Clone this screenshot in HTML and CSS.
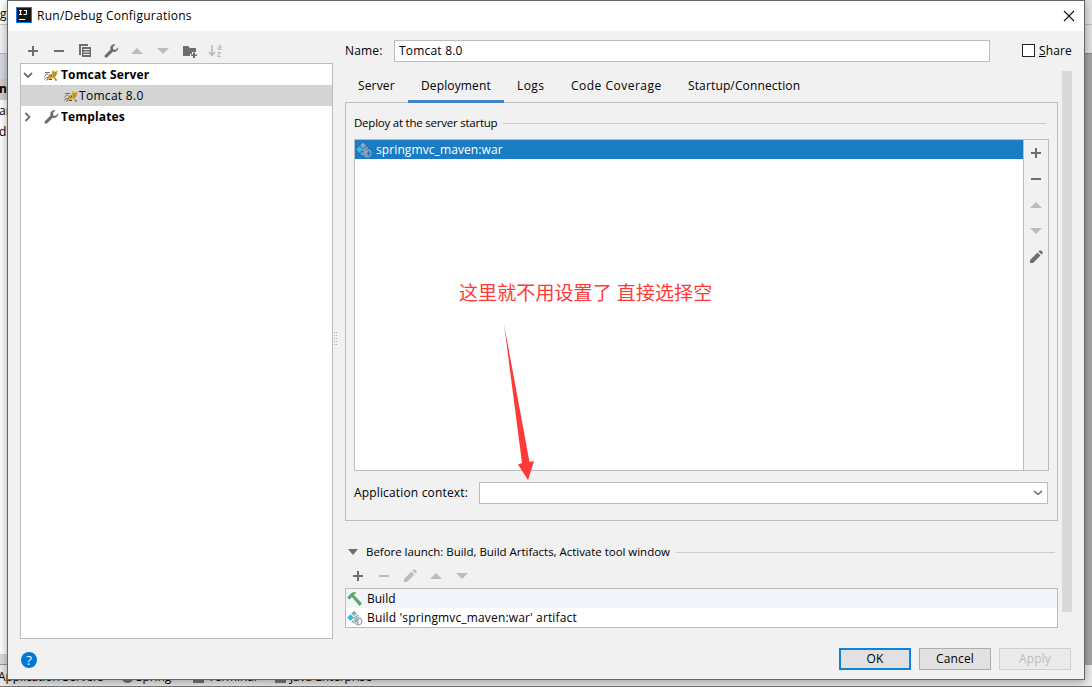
FILE: index.html
```html
<!DOCTYPE html>
<html lang="zh-CN">
<head>
    <meta charset="UTF-8">
    <meta name="viewport" content="width=device-width, initial-scale=1.0">
    <link rel="stylesheet" href="styles.css">
    <title>Run/Debug Configurations</title>
</head>
<body>
    <!-- shared icons -->
    <svg class="sprite">
        <symbol id="plus" viewBox="0 0 16 16"><path d="M7 3h2v4h4v2h-4v4h-2v-4h-4v-2h4z" fill="currentColor"/></symbol>
        <symbol id="minus" viewBox="0 0 16 16"><path d="M3 7h10v2h-10z" fill="currentColor"/></symbol>
        <symbol id="up" viewBox="0 0 16 16"><path d="M8 5l6 6h-12z" fill="currentColor"/></symbol>
        <symbol id="down" viewBox="0 0 16 16"><path d="M8 11l6-6h-12z" fill="currentColor"/></symbol>
        <symbol id="pencil" viewBox="0 0 16 16"><path d="M2 11l7.500-7.500 3 3-7.500 7.500h-3zM10.500 2.500l1-1q.8-.7 1.600 0l1.400 1.400q.7.800 0 1.600l-1 1z" fill="currentColor"/></symbol>
        <symbol id="wrench" viewBox="0 0 16 16"><path d="M14.300 4.200l-2.700 2.600-2.300-.4-.4-2.300 2.600-2.700c-1.800-.5-3.500.1-4.500 1.500-.8 1.100-.9 2.300-.5 3.500l-5.500 5.600c-.6.6-.6 1.600 0 2.200s1.600.6 2.200 0l5.600-5.500c1.300.5 2.700.2 3.800-.7 1.200-1 1.900-2.400 1.700-3.800z" fill="currentColor"/></symbol>
        <symbol id="artifact" viewBox="0 0 16 16">
            <path d="M7 1l2.500 2.500-2.500 2.500-2.500-2.500z" fill="#9aa7b0" stroke="#9aa7b0" stroke-width=".6"/>
            <path d="M3.500 4.500l3 3-3 3-3-3z" fill="#40b6e0" stroke="#40b6e0" stroke-width=".6"/>
            <path d="M10.500 4.500l1.800 1.800c-2.500.2-4.300 1.200-5 3l-1.300-1.300z" fill="#9aa7b0"/>
            <path d="M6 10l.6 1 .4 2.500-3-2z" fill="#9aa7b0"/>
            <circle cx="11.300" cy="11.300" r="3.500" fill="none" stroke="#9aa7b0" stroke-width="1.200"/>
            <path d="M8.500 9.500l3-1 .8 1.200-1.800 1.500 1.500 1.300-.8 2.200-1.500-2-1.500-1z" fill="#9aa7b0"/>
        </symbol>
        <symbol id="tomcat" viewBox="0 0 16 16">
            <path d="M2 5.500h5M1.500 9.500q1-3 4-2.500M1 12.500l3-2.500M3 13.500l3-2" stroke="#77756d" stroke-width="1" fill="none"/>
            <path d="M4 11.500l2-4 2.500-.5 .8-4 2 1.500h1l2.200-1.500v4l-1.500 1.500-.5 1 1 3.500h-1.500l-2-2-2.500 1.500h-2.500z" fill="#d9ab47"/>
            <path d="M6 8.500l1.500 1M8 7.500l1 2M10.500 5.500v1M12.500 5.500v1M10.500 8h2M6 12.500h3M12 13h2M4 11l1.500-.5" stroke="#4a4435" stroke-width=".9" fill="none"/>
        </symbol>
    </svg>

    <!-- IDE window behind the dialog -->
    <div class="ide">
        <div class="ide-left">
            <span class="ide-menu">g</span>
            <span class="ide-nav"></span>
            <span class="ide-bar"></span>
            <span class="ide-row ide-active">na</span>
            <span class="ide-row">ar</span>
            <span class="ide-row">d</span>
            <span class="ide-foot"></span>
        </div>
        <div class="ide-right">
            <span class="ide-top"></span>
            <span class="ide-tools"></span>
            <span class="ide-editor"></span>
        </div>
        <div class="ide-tabs">
            <span class="tool t-servers">Application Servers</span>
            <i class="blob"></i><span class="tool t-spring">Spring</span>
            <i class="blob square"></i><span class="tool t-terminal">Terminal</span>
            <i class="blob square"></i><span class="tool t-java">Java Enterprise</span>
        </div>
    </div>

    <div class="dialog">
        <div class="titlebar">
            <svg class="logo" viewBox="0 0 16 16"><rect width="16" height="16" fill="#087cfa"/><rect x="1" y="1" width="14" height="14" fill="#151515"/><path d="M3 3.500h3M4.500 3.500v4M3 7.500h3M8 3.500h2.500v3q0 1-1 1h-2M3 12.500h6" stroke="#fff" stroke-width="1.100" fill="none"/></svg>
            <span class="title">Run/Debug Configurations</span>
            <svg class="close" viewBox="0 0 12 12"><path d="M1 1l10 10M11 1l-10 10" stroke="#111" stroke-width="1.100"/></svg>
        </div>

        <div class="content">
            <div class="sidebar">
                <div class="toolbar">
                    <svg class="icon"><use href="#plus"/></svg>
                    <svg class="icon"><use href="#minus"/></svg>
                    <svg class="icon" viewBox="0 0 16 16"><path d="M2 1h9v2h-7v9h-2z" fill="currentColor"/><path d="M5 4h9v10h-9zM6.500 6v1h6v-1zM6.500 8.500v1h6v-1zM6.500 11v1h6v-1z" fill="currentColor" fill-rule="evenodd"/></svg>
                    <svg class="icon wr"><use href="#wrench"/></svg>
                    <svg class="icon off"><use href="#up"/></svg>
                    <svg class="icon off"><use href="#down"/></svg>
                    <svg class="icon folder" viewBox="0 0 16 16"><path d="M1 3h5l2 2h6v4h-4v2h-2v2h-7z" fill="currentColor"/><path d="M11 9.500h2v2h2v1.500h-2v2h-2v-2h-2v-1.500h2z" fill="currentColor"/></svg>
                    <svg class="icon off sort-icon" viewBox="0 0 16 16"><path d="M4 2v10M1 9l3 3.500 3-3.500" stroke="currentColor" stroke-width="1.700" fill="none"/><text x="9" y="6.500" class="sort">a</text><text x="9" y="14" class="sort">z</text></svg>
                </div>
                <div class="tree">
                    <div class="node">
                        <svg class="arrow" viewBox="0 0 10 10"><path d="M1 3l4 4 4-4" stroke="#6e6e6e" stroke-width="1.800" fill="none"/></svg>
                        <svg class="icon"><use href="#tomcat"/></svg>
                        <b>Tomcat Server</b>
                    </div>
                    <div class="node child selected">
                        <svg class="icon"><use href="#tomcat"/></svg>
                        <span class="n-tomcat">Tomcat 8.0</span>
                    </div>
                    <div class="node">
                        <svg class="arrow" viewBox="0 0 10 10"><path d="M2.500 1l4 4-4 4" stroke="#6e6e6e" stroke-width="1.800" fill="none"/></svg>
                        <svg class="icon wr"><use href="#wrench"/></svg>
                        <b>Templates</b>
                    </div>
                </div>
            </div>

            <div class="splitter"><i></i><i></i><i></i><i></i><i></i><i></i><i></i><i></i><i></i><i></i></div>

            <div class="main">
                <div class="name-row">
                    <label class="name-label">Name:</label>
                    <div class="name-input">Tomcat 8.0</div>
                    <span class="checkbox"></span>
                    <span class="share"><u>S</u>hare</span>
                </div>
                <div class="scroll-area">
                    <div class="form">
                        <div class="tabs">
                            <span class="tab tab-server">Server</span>
                            <span class="tab tab-deploy active">Deployment</span>
                            <span class="tab tab-logs">Logs</span>
                            <span class="tab tab-code">Code Coverage</span>
                            <span class="tab tab-startup">Startup/Connection</span>
                        </div>
                        <div class="panel">
                            <div class="heading"><span class="h-deploy">Deploy at the server startup</span></div>
                            <div class="deploy">
                                <div class="list">
                                    <div class="list-row">
                                        <svg class="icon"><use href="#artifact"/></svg>
                                        <span class="war">springmvc_maven:war</span>
                                    </div>
                                    <p class="note">这里就不用设置了 直接选择空</p>
                                    <svg class="pointer" viewBox="0 0 32 156"><path d="M0 0L25.500 138L30 137L24 156L14 140.500L18 139Z" fill="#ff3838"/></svg>
                                </div>
                                <div class="actions">
                                    <svg class="icon"><use href="#plus"/></svg>
                                    <svg class="icon"><use href="#minus"/></svg>
                                    <svg class="icon off"><use href="#up"/></svg>
                                    <svg class="icon off"><use href="#down"/></svg>
                                    <svg class="icon"><use href="#pencil"/></svg>
                                </div>
                            </div>
                            <div class="context">
                                <span class="context-label">Application context:</span>
                                <div class="combo"><svg class="chevron" viewBox="0 0 10 6"><path d="M1 1l4 3.500 4-3.500" stroke="#555" stroke-width="1.200" fill="none"/></svg></div>
                            </div>
                        </div>
                        <div class="heading launch">
                            <svg class="caret" viewBox="0 0 10 6"><path d="M0 0h10l-5 6z" fill="#6e6e6e"/></svg>
                            <span class="h-launch">Before launch: Build, Build Artifacts, Activate tool window</span>
                        </div>
                        <div class="toolbar tasks-bar">
                            <svg class="icon"><use href="#plus"/></svg>
                            <svg class="icon off"><use href="#minus"/></svg>
                            <svg class="icon off"><use href="#pencil"/></svg>
                            <svg class="icon off"><use href="#up"/></svg>
                            <svg class="icon off"><use href="#down"/></svg>
                        </div>
                        <div class="tasks">
                            <div class="task first">
                                <svg class="icon" viewBox="0 0 16 16"><path d="M0 6.500l5-5 4.500-.5-2.500 3 8 8.500-2.500 2.500-7.500-9-2.500 2.500z" fill="#59a869"/></svg>
                                <span class="k-build">Build</span>
                            </div>
                            <div class="task">
                                <svg class="icon"><use href="#artifact"/></svg>
                                <span class="k-artifact">Build 'springmvc_maven:war' artifact</span>
                            </div>
                        </div>
                    </div>
                    <div class="scrollbar"></div>
                </div>
            </div>
        </div>

        <div class="footer">
            <span class="help">?</span>
            <span class="btn ok">OK</span>
            <span class="btn">Cancel</span>
            <span class="btn disabled">Apply</span>
        </div>
    </div>
</body>
</html>
```
FILE: styles.css
```css
* {
    box-sizing: border-box;
}

body {
    margin: 0;
    width: 1092px;
    height: 687px;
    overflow: hidden;
    position: relative;
    background: #f0f0f0;
    color: #000;
    font: 12px/16px "Open Sans", "Noto Sans CJK SC", sans-serif;
    white-space: nowrap;
}

svg {
    display: block;
    flex: none;
}

.sprite {
    position: absolute;
    width: 0;
    height: 0;
}

.icon {
    width: 16px;
    height: 16px;
    color: #6e6e6e;
}

.off {
    color: #bcbcbc;
}

.sort-icon {
    overflow: visible;
}

.sort {
    font: bold 8px "Open Sans", sans-serif;
    fill: #bcbcbc;
}

/* window behind */
.ide {
    display: grid;
    grid-template-columns: 8px 1fr 8px;
    grid-template-rows: 665px 22px;
    height: 687px;
}

.ide-left {
    display: flex;
    flex-direction: column;
    background: #fff;
    border-bottom: 1px solid #999;
    overflow: hidden;
}

.ide-left span {
    flex: none;
}

.ide-menu {
    height: 25px;
    padding-top: 6px;
    border-bottom: 1px solid #ccc;
}

.ide-nav {
    height: 29px;
    background: #f2f2f2;
    border-bottom: 1px solid #bbb;
}

.ide-bar {
    height: 25px;
    background: #d5d9e0;
}

.ide-row {
    height: 21px;
    padding-top: 3px;
    text-indent: -1px;
}

.ide-active {
    background: #d0d0d0;
    font-weight: bold;
    padding-top: 2px;
}

.ide-foot {
    margin-top: auto;
    height: 10px;
    background: #d8d8d8;
}

.ide-right {
    grid-column: 3;
    display: flex;
    flex-direction: column;
}

.ide-top {
    height: 25px;
    background: #e4e4e4;
    border-bottom: 1px solid #bbb;
}

.ide-tools {
    height: 29px;
    background: #e2e2e2;
    border-bottom: 1px solid #888;
}

.ide-editor {
    flex: 1;
    background: #a6a6a6;
}

.ide-tabs {
    grid-column: 1 / 4;
    display: flex;
    align-items: flex-start;
    background: #ebebeb;
    border-bottom: 1px solid #777;
    padding-top: 4px;
}

.tool {
    text-indent: -2px;
    letter-spacing: -.1px;
}

.t-servers {
    width: 97px;
}

.t-spring {
    width: 34px;
}

.t-terminal {
    width: 44px;
}

.blob {
    width: 11px;
    height: 9px;
    margin: 5px 5px 0 25px;
    border-radius: 50%;
    background: #777;
}

.square {
    margin: 5px 6px 0 21px;
    border-radius: 0;
}

/* dialog */
.dialog {
    position: absolute;
    left: 7px;
    top: 0;
    width: 1078px;
    height: 680px;
    display: flex;
    flex-direction: column;
    border: 1px solid #666;
    background: #f1f1f1;
    box-shadow: 0 2px 9px rgba(0, 0, 0, .35);
}

.titlebar {
    height: 30px;
    display: flex;
    align-items: center;
    padding: 0 9px 0 8px;
    background: #fff;
}

.logo {
    width: 16px;
    height: 16px;
    margin-top: -2px;
}

.title {
    margin: 0 auto 0 5px;
    letter-spacing: .26px;
}

.close {
    width: 12px;
    height: 12px;
    margin-top: -1px;
}

.content {
    display: flex;
    height: 608px;
}

.sidebar {
    width: 313px;
    margin-left: 12px;
}

.toolbar {
    display: flex;
    gap: 10px;
    padding: 12px 0 0 5px;
    height: 32px;
}

.wr,
.folder,
.sort-icon {
    position: relative;
    left: 1px;
}

.tree {
    height: 576px;
    background: #fff;
    border: 1px solid #bcbcbc;
}

.node {
    display: flex;
    align-items: center;
    height: 21px;
    padding-left: 2px;
}

.arrow {
    width: 10px;
    height: 10px;
    margin-right: 10px;
}

.node b {
    margin-left: 2px;
    letter-spacing: .15px;
}

.n-tomcat {
    letter-spacing: .3px;
}

.child {
    padding-left: 42px;
}

.selected {
    background: #d4d4d4;
}

.splitter {
    width: 5px;
    margin: 301px 6px 0 1px;
    display: grid;
    grid-template-columns: 2px 2px;
    grid-auto-rows: 3px;
    align-content: start;
}

.splitter i {
    width: 1px;
    height: 1px;
    background: #aaa;
}

.main {
    flex: 1;
    margin-right: 12px;
}

.name-row {
    display: flex;
    align-items: center;
    height: 40px;
}

.name-label {
    width: 49px;
    letter-spacing: .15px;
}

.name-input {
    width: 596px;
    height: 22px;
    padding: 2px 4px;
    background: #fff;
    border: 1px solid #bcbcbc;
    letter-spacing: .2px;
}

.checkbox {
    width: 13px;
    height: 13px;
    margin: -1px 4px 0 32px;
    background: #fff;
    border: 1px solid #222;
}

.share {
    letter-spacing: .15px;
}

.scroll-area {
    display: flex;
    justify-content: space-between;
}

.form {
    width: 713px;
}

.scrollbar {
    width: 10px;
    height: 541px;
    background: #d9d9d9;
}

.tabs {
    display: flex;
    height: 32px;
    position: relative;
}

.tab {
    padding: 7px 0 0 13px;
    letter-spacing: .14px;
}

.tab-server {
    width: 63px;
}

.tab-deploy {
    width: 96px;
}

.tab-logs {
    width: 54px;
    letter-spacing: .4px;
}

.tab-code {
    width: 117px;
    letter-spacing: .5px;
}

.active {
    border-bottom: 3px solid #4083c9;
}

.panel {
    height: 419px;
    margin-top: -1px;
    padding: 12px 8px 0;
    border: 1px solid #bcbcbc;
}

.heading {
    display: flex;
    align-items: center;
    font-size: 11.5px;
}

.heading::after {
    content: "";
    flex: 1;
    height: 1px;
    margin: 0 3px 0 6px;
    background: #cdcdcd;
}

.h-deploy {
    letter-spacing: -.23px;
}

.h-launch {
    letter-spacing: -.03px;
}

.deploy {
    display: flex;
    width: 695px;
    height: 332px;
    margin-top: 8px;
    border: 1px solid #bcbcbc;
}

.list {
    position: relative;
    flex: 1;
    background: #fff;
}

.list-row {
    display: flex;
    align-items: center;
    gap: 4px;
    height: 19px;
    padding-left: 1px;
    background: #1a7dc4;
    color: #fff;
}

.war {
    letter-spacing: .1px;
}

/* annotation over the list */
.note {
    position: absolute;
    left: 104px;
    top: 138px;
    margin: 0;
    font-size: 19px;
    line-height: 30px;
    letter-spacing: .1px;
    color: #ff3838;
}

.pointer {
    position: absolute;
    left: 149px;
    top: 184px;
    width: 32px;
    height: 156px;
}

.actions {
    width: 25px;
    border-left: 1px solid #bcbcbc;
    display: flex;
    flex-direction: column;
    gap: 10px;
    padding: 5px 4px;
}

.context {
    display: flex;
    align-items: center;
    margin-top: 11px;
}

.context-label {
    width: 125px;
    letter-spacing: .16px;
}

.combo {
    display: flex;
    align-items: center;
    justify-content: flex-end;
    width: 569px;
    height: 22px;
    padding-right: 4px;
    background: #fff;
    border: 1px solid #bcbcbc;
}

.chevron {
    width: 10px;
    height: 6px;
}

.launch {
    margin-top: 23px;
    padding-left: 3px;
}

.caret {
    width: 10px;
    height: 6px;
    margin-right: 8px;
}

.tasks-bar {
    padding-top: 8px;
    height: 28px;
}

.tasks {
    height: 40px;
    background: #fff;
    border: 1px solid #bcbcbc;
}

.task {
    display: flex;
    align-items: center;
    gap: 4px;
    height: 19px;
    padding-left: 1px;
}

.first {
    background: #f1f5fa;
}

.k-artifact {
    letter-spacing: .15px;
}

.footer {
    display: flex;
    align-items: center;
    gap: 8px;
    height: 40px;
    padding: 0 13px;
}

.help {
    width: 16px;
    height: 16px;
    margin: 2px auto 0 0;
    border-radius: 50%;
    background: #0078d7;
    color: #fff;
    font-size: 13px;
    text-align: center;
}

.btn {
    width: 72px;
    height: 22px;
    line-height: 20px;
    text-align: center;
    background: #e1e1e1;
    border: 1px solid #adadad;
    letter-spacing: .15px;
}

.ok {
    border: 2px solid #0b84dc;
    line-height: 18px;
}

.disabled {
    background: #ebebeb;
    border-color: #d0d0d0;
    color: #bcbcbc;
}
```
